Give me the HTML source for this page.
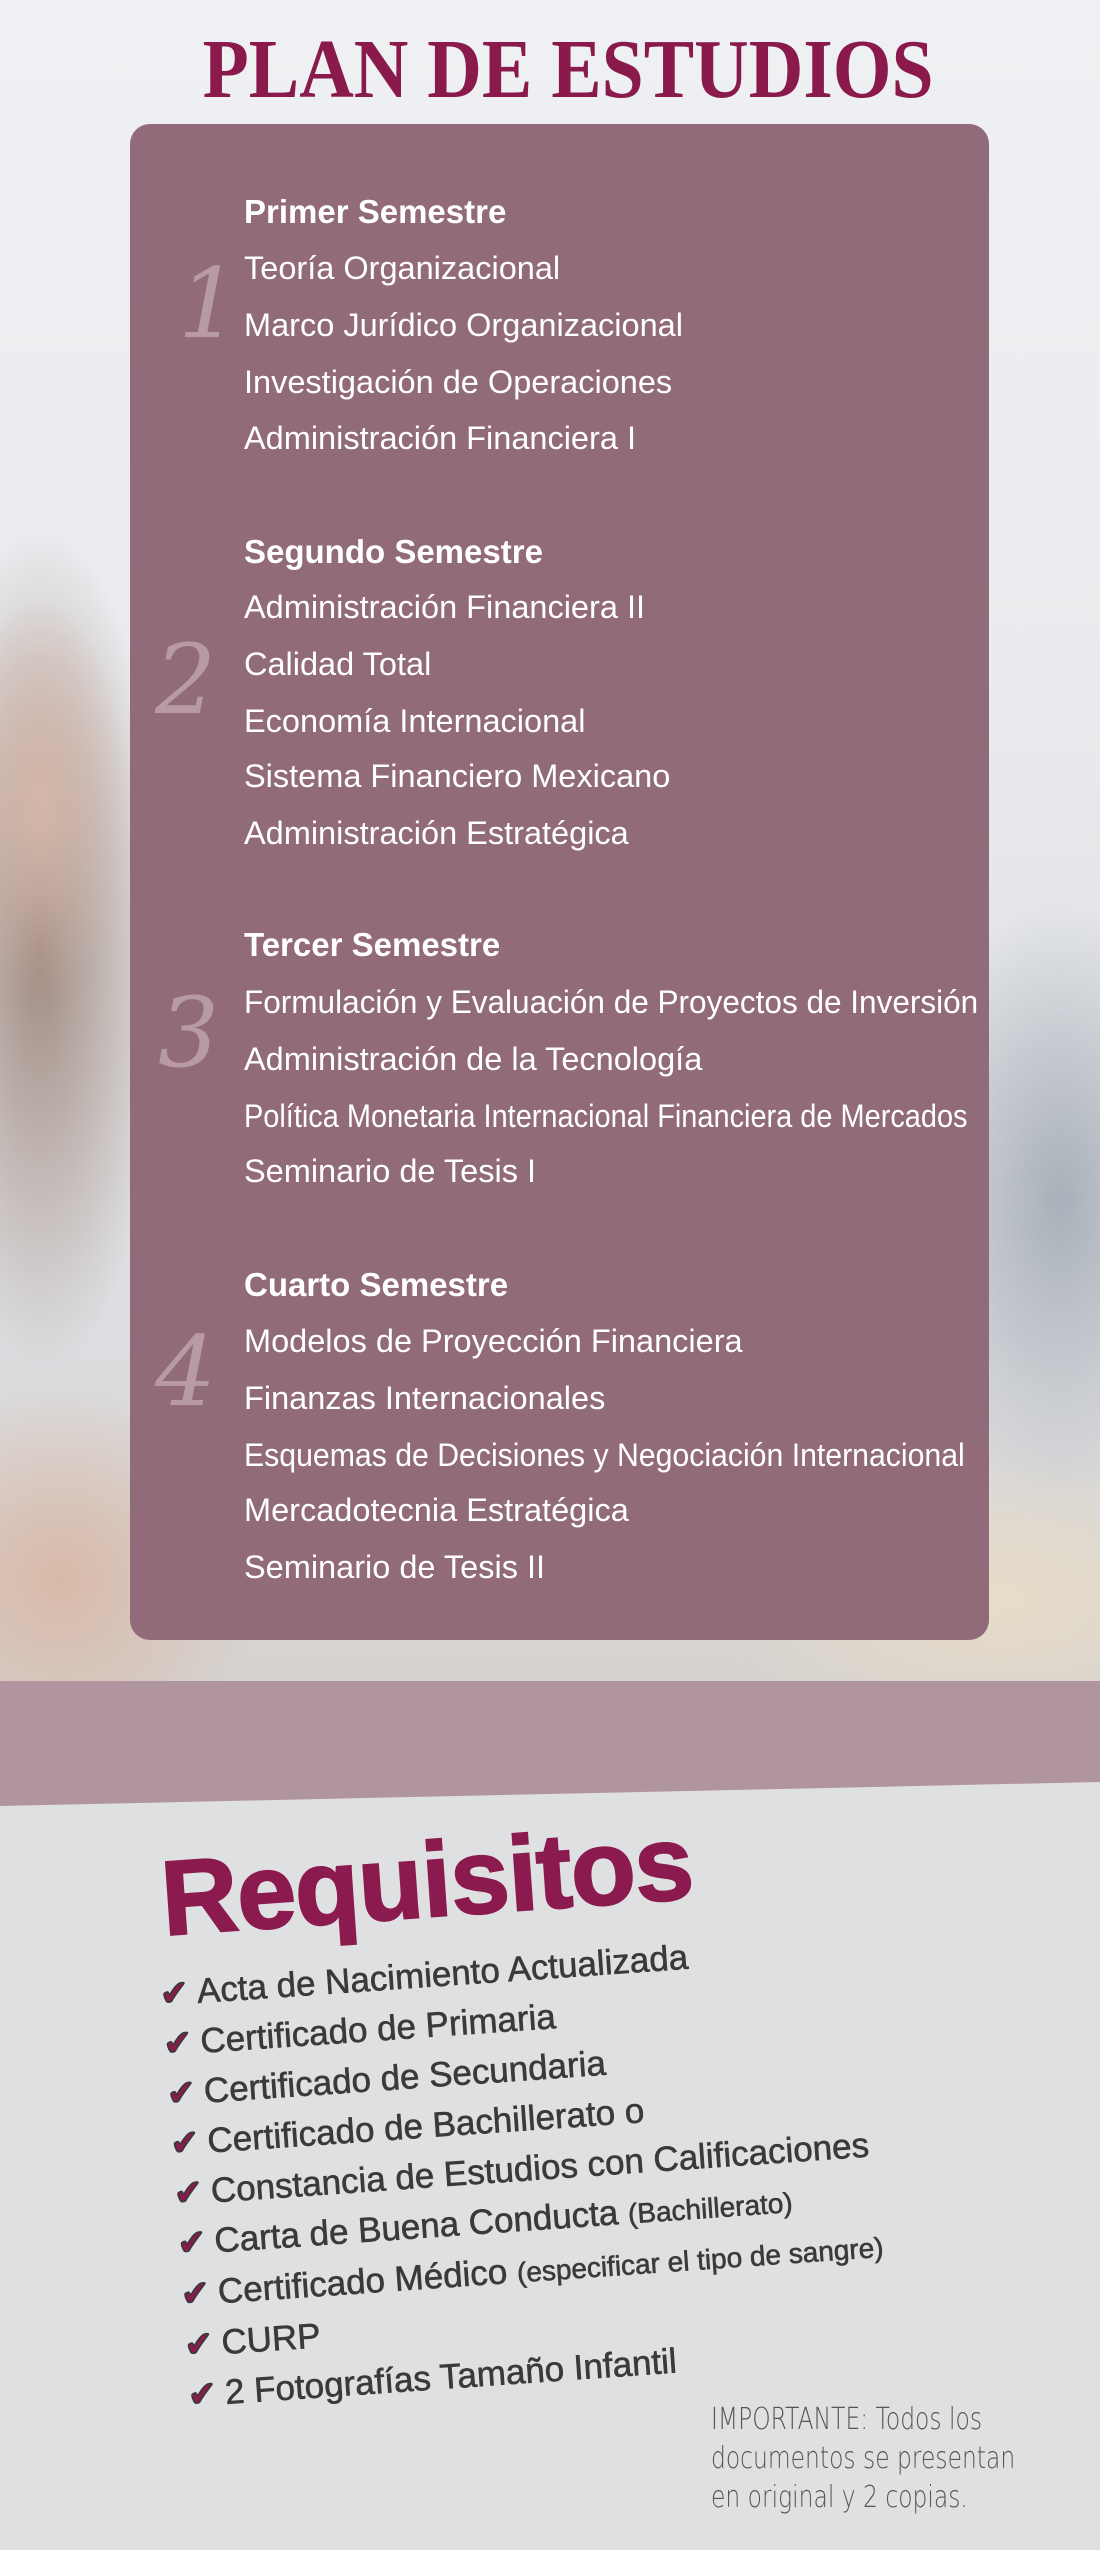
<!DOCTYPE html>
<html><head><meta charset="utf-8"><style>
*{margin:0;padding:0;box-sizing:border-box}
body{width:1100px;height:2550px;position:relative;overflow:hidden;background:#dfe0e2;font-family:"Liberation Sans",sans-serif}
.photo{position:absolute;left:0;top:0;width:1100px;height:1681px;
background:
radial-gradient(ellipse 90px 200px at 40px 800px,#d4b6a8 0%,rgba(212,182,168,0) 100%),
radial-gradient(ellipse 130px 420px at 40px 950px,#a08a80 0%,rgba(160,138,128,0.5) 50%,rgba(160,138,128,0) 100%),
radial-gradient(ellipse 160px 300px at 1060px 1200px,#a9b0b9 0%,rgba(169,176,185,0) 100%),
radial-gradient(ellipse 200px 200px at 60px 1580px,#d8b9a8 0%,rgba(216,185,168,0) 100%),
radial-gradient(ellipse 300px 150px at 1000px 1600px,#e8dcc8 0%,rgba(232,220,200,0) 100%),
linear-gradient(180deg,#eef0f3 0%,#e9ebee 40%,#dcdde0 80%,#d5d2cf 100%)}
.band{position:absolute;left:0;top:1681px;width:1100px;height:130px;background:#b0959f;clip-path:polygon(0 0,100% 0,100% 101px,0 125px)}
h1{position:absolute;left:18px;width:1100px;top:28px;text-align:center;color:#8a1a4c;font-family:"Liberation Serif",serif;font-weight:bold;font-size:84px;line-height:84px}
h1 span{display:inline-block;transform:scaleX(0.9)}
.box{position:absolute;left:130px;top:124px;width:859px;height:1516px;background:#926b7a;border-radius:20px}
.t{position:absolute;left:244px;color:#fff;font-size:32.5px;line-height:40px;white-space:nowrap;transform:translateY(-20px);transform-origin:left center}
.h{font-weight:bold;font-size:33px}
.n{position:absolute;color:#b89aa6;font-family:"DejaVu Serif",serif;font-style:italic;font-weight:200;font-size:96px;line-height:100px;transform:translateY(-50px)}
.req{position:absolute;left:150px;top:1850px;transform:rotate(-4deg);transform-origin:left top}
.req .R{font-weight:bold;font-size:106px;line-height:100px;color:#8b1a4e;margin-left:8px;letter-spacing:-1px;-webkit-text-stroke:2px #8b1a4e}
.req ul{list-style:none;margin-top:20px}
.req li{font-size:35px;line-height:49px;color:#3a3a3a;white-space:nowrap;-webkit-text-stroke:0.6px #3a3a3a}
.req li b{display:inline-block;width:37px;color:#8b1a4e;font-size:34px}
.req small{font-size:28px}
.imp{position:absolute;left:711px;top:2400px;color:#555;font-size:30px;line-height:39px;font-family:"DejaVu Sans",sans-serif;font-weight:200;transform:scaleX(0.78);transform-origin:left top;white-space:nowrap}
</style></head><body>
<div class="photo"></div>
<div class="band"></div>
<h1><span>PLAN DE ESTUDIOS</span></h1>
<div class="box"></div>
<div class="n" style="left:178px;top:304px">1</div>
<div class="n" style="left:155px;top:680px">2</div>
<div class="n" style="left:158px;top:1033px">3</div>
<div class="n" style="left:155px;top:1372px">4</div>

<div class="t h" style="top:212px">Primer Semestre</div>
<div class="t" style="top:268px">Teoría Organizacional</div>
<div class="t" style="top:325px">Marco Jurídico Organizacional</div>
<div class="t" style="top:382px">Investigación de Operaciones</div>
<div class="t" style="top:438px">Administración Financiera I</div>

<div class="t h" style="top:552px">Segundo Semestre</div>
<div class="t" style="top:607px">Administración Financiera II</div>
<div class="t" style="top:664px">Calidad Total</div>
<div class="t" style="top:721px">Economía Internacional</div>
<div class="t" style="top:776px">Sistema Financiero Mexicano</div>
<div class="t" style="top:833px">Administración Estratégica</div>

<div class="t h" style="top:945px">Tercer Semestre</div>
<div class="t" style="top:1002px;transform:translateY(-20px) scaleX(0.97)">Formulación y Evaluación de Proyectos de Inversión</div>
<div class="t" style="top:1059px">Administración de la Tecnología</div>
<div class="t" style="top:1116px;transform:translateY(-20px) scaleX(0.89)">Política Monetaria Internacional Financiera de Mercados</div>
<div class="t" style="top:1171px">Seminario de Tesis I</div>

<div class="t h" style="top:1285px">Cuarto Semestre</div>
<div class="t" style="top:1341px">Modelos de Proyección Financiera</div>
<div class="t" style="top:1398px">Finanzas Internacionales</div>
<div class="t" style="top:1455px;transform:translateY(-20px) scaleX(0.93)">Esquemas de Decisiones y Negociación Internacional</div>
<div class="t" style="top:1510px">Mercadotecnia Estratégica</div>
<div class="t" style="top:1567px">Seminario de Tesis II</div>

<div class="req">
<div class="R">Requisitos</div>
<ul>
<li><b>✔</b>Acta de Nacimiento Actualizada</li>
<li><b>✔</b>Certificado de Primaria</li>
<li><b>✔</b>Certificado de Secundaria</li>
<li><b>✔</b>Certificado de Bachillerato o</li>
<li><b>✔</b>Constancia de Estudios con Calificaciones</li>
<li><b>✔</b>Carta de Buena Conducta <small>(Bachillerato)</small></li>
<li><b>✔</b>Certificado Médico <small>(especificar el tipo de sangre)</small></li>
<li><b>✔</b>CURP</li>
<li><b>✔</b>2 Fotografías Tamaño Infantil</li>
</ul>
</div>
<div class="imp">IMPORTANTE: Todos los<br>documentos se presentan<br>en original y 2 copias.</div>
</body></html>
